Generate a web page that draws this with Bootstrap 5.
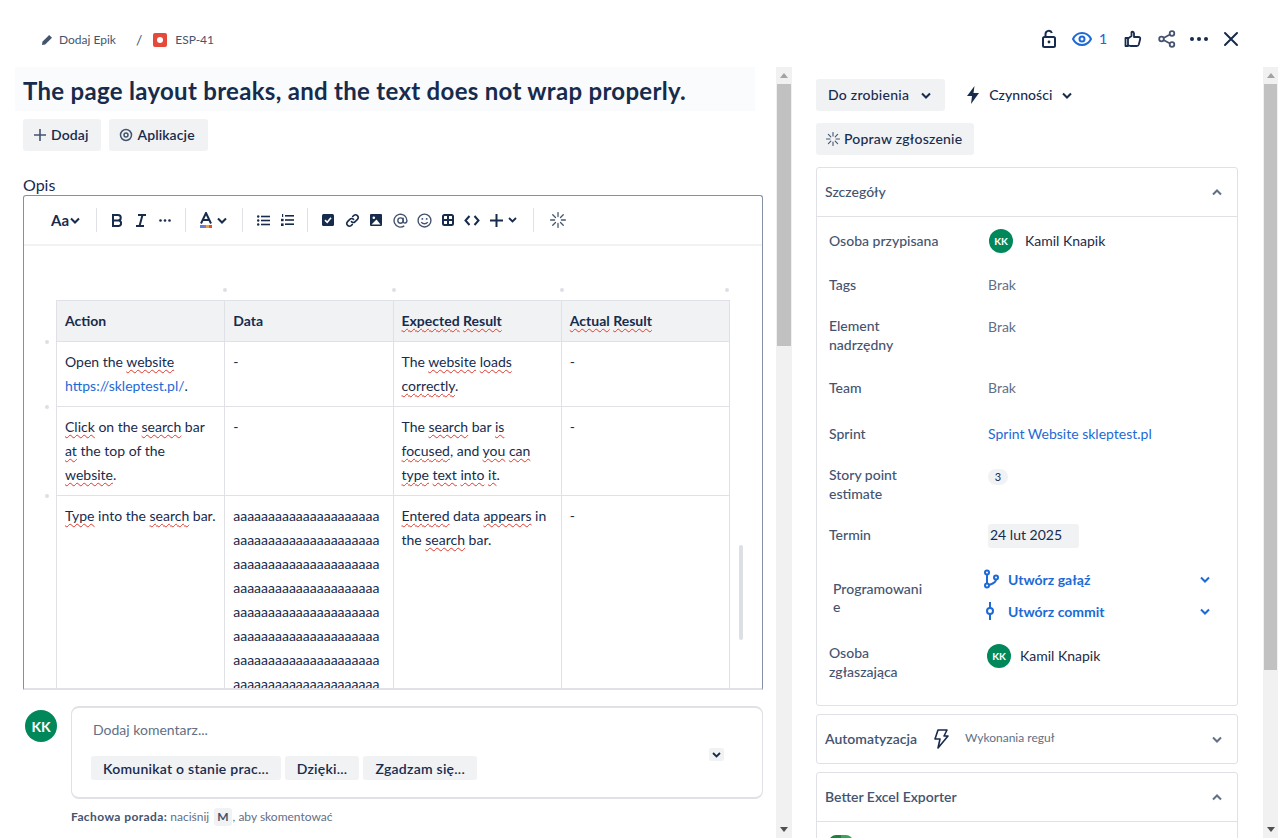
<!DOCTYPE html>
<html lang="pl">
<head>
<meta charset="UTF-8" />
<title>ESP-41</title>
<link rel="stylesheet" href="https://cdn.jsdelivr.net/npm/bootstrap@5.3.3/dist/css/bootstrap.min.css" />
<style>
  html, body { height: 100%; overflow: hidden; }
  body { font-family: "Lato", "Noto Sans", sans-serif; font-size: 14px; color: #172b4d; background: #fff; }
  svg { display: block; flex: none; }
  .topbar { height: 67px; padding: 12px 0 0 41px; }
  .crumb { font-size: 12px; color: #44546f; }
  .crumb-pen { margin-right: 6px; }
  .crumb-slash { margin: 0 11px 0 20px; font-size: 14px; }
  .issue-ico { width: 14px; height: 14px; background: #e5493a; border-radius: 2px; margin-right: 8px; }
  .issue-ico::after { content: ""; width: 6px; height: 6px; border-radius: 50%; background: #fff; }
  .top-acts { margin: -2px 31px 0 0; }
  .top-act { width: 32px; height: 24px; }
  .lock-act { margin-right: 7px; }
  .thumb-act { margin-right: 2px; }
  .watch { width: 45px; color: #1d6ad6; font-size: 14px; font-weight: 500; gap: 7px; }

  .panes { height: 771px; }
  .leftpane { width: 776px; overflow: hidden; }
  .rightpane { width: 471px; padding: 12px 25px 0 24px; overflow: hidden; }
  .sbar { background: #f1f1f1; width: 16px; }
  .sbar-r { width: 15px; }
  .sbar-up, .sbar-down { height: 17px; }
  .sbar-up::after { content: ""; border: 4px solid transparent; border-top: 0; border-bottom: 5px solid #a3a3a3; }
  .sbar-down::after { content: ""; border: 4px solid transparent; border-bottom: 0; border-top: 5px solid #505050; }
  .sbar-thumb { background: #c1c1c1; margin: 0 1px; }
  .thumb-l { height: 262px; }
  .thumb-r { height: 586px; }

  .title-box { margin-left: 15px; width: 740px; height: 44px; padding-left: 8px; background: #fafbfc; font-size: 24px; font-weight: 700; line-height: 48px; letter-spacing: .3px; }
  .act-btn { height: 32px; padding: 0 13px 2px 10px; border-radius: 3px; border: 0; background: #f1f2f4; color: #172b4d; font-size: 14px; font-weight: 600; letter-spacing: .1px; gap: 4px; }
  .act-btn svg { margin-top: 2px; }
  .left-acts { margin: 8px 0 0 23px; gap: 8px; }
  .opis-lbl { margin: 26px 0 0 23px; font-size: 16px; line-height: 16px; padding-bottom: 2px; }

  .editor { margin-left: 23px; width: 740px; height: 495px; border: 1px solid #8590a2; border-bottom: 2px solid #dfe1e6; border-radius: 3px 3px 0 0; position: relative; overflow: hidden; }
  .tbar { height: 50px; border-bottom: 2px solid #f1f2f4; padding-left: 15px; }
  .tb-ico { width: 24px; height: 24px; }
  .tb-sep { width: 1px; height: 24px; background: #dfe1e6; margin: 0 8px; }
  .tb-sep-wide { margin-left: 15px; }
  .tb-aa { font-size: 15px; font-weight: 700; width: 49px; padding-left: 12px; gap: 1px; }
  .tb-chev { margin-left: -1px; }
  .editor-body { padding: 54px 0 0 32px; }
  .desc-tbl { table-layout: fixed; width: 674px; border-collapse: collapse; line-height: 24px; }
  .desc-tbl th, .desc-tbl td { border: 1px solid #dfe1e6; padding: 8px; vertical-align: top; position: relative; font-weight: 400; }
  .desc-tbl th { background: #f1f2f4; font-weight: 700; }
  .desc-tbl a { color: #1d6ad6; text-decoration: none; }
  .aaa { word-break: break-all; }
  .typo { text-decoration: underline wavy #e0392b; text-decoration-thickness: 1.2px; text-underline-offset: 2px; }
  .hdot, .vdot { position: absolute; width: 4px; height: 4px; border-radius: 50%; background: #dcdfe4; }
  .hdot { right: -3px; top: -13px; }
  .desc-tbl th:last-child .hdot { right: 0; }
  .vdot { left: -12px; top: -2px; }
  .inner-thumb { position: absolute; right: 19px; top: 349px; width: 4px; height: 95px; background: #dcdfe4; border-radius: 2px; }

  .cmt-wrap { padding: 16px 13px 0 25px; gap: 14px; }
  .ava { background: #00875a; color: #fff; border-radius: 50%; font-weight: 700; }
  .ava-32 { width: 32px; height: 32px; font-size: 14px; margin-top: 4px; }
  .ava-24 { width: 24px; height: 24px; font-size: 10px; }
  .cmt-box { width: 692px; height: 93px; border: 1px solid #dfe1e6; border-top-width: 2px; border-bottom-width: 2px; border-radius: 8px; padding: 12px 19px; position: relative; }
  .cmt-ph { color: #626f86; line-height: 20px; padding-left: 2px; }
  .cmt-chips { margin-top: 16px; gap: 4px; }
  .cmt-chip { height: 24px; padding: 0 12px; background: #f1f2f4; border-radius: 3px; font-weight: 600; font-size: 14px; color: #172b4d; border: 0; letter-spacing: .25px; }
  .cmt-more { position: absolute; right: 38px; top: 40px; width: 15px; height: 13px; background: #f1f2f4; border-radius: 2px; }
  .tip { margin: 9px 0 0 71px; font-size: 12px; color: #626f86; line-height: 18px; }
  .tip b { color: #44546f; font-weight: 700; letter-spacing: .4px; }
  .keycap { background: #f1f2f4; padding: 0 3px; margin: 0 1px 0 2px; border-radius: 3px; font-weight: 700; color: #44546f; display: inline-block; }

  .status-row { gap: 8px; margin-bottom: 12px; }
  .status-btn { padding: 0 14px 2px 12px; font-weight: 500; letter-spacing: .25px; }
  .plain-btn { background: transparent; gap: 8px; padding-left: 12px; font-weight: 500; letter-spacing: .05px; }
  .chev-tight { margin-left: 2px; }
  .fix-btn { padding-right: 12px; font-weight: 500; letter-spacing: .22px; }
  .panel-box { border: 1px solid #dfe1e6; border-radius: 3px; margin-bottom: 8px; }
  .panel-hd { height: 48px; padding: 0 15px 2px 8px; font-weight: 500; color: #44546f; }
  .panel-hd svg { margin-top: 2px; }
  .panel-hd.ruled { height: 49px; border-bottom: 1px solid #dfe1e6; }
  .panel-name { font-weight: 600; }
  .first-panel { margin-top: 12px; }
  .det-grid { display: grid; grid-template-columns: 159px 1fr; grid-template-rows: 46px 42px 61px 46px 42px 59px 43px 76px 61px; padding: 12px 12px 0 12px; line-height: 19px; }
  .det-lbl { color: #44546f; font-weight: 500; padding-right: 50px; }
  .det-lbl.one { line-height: 20px; }
  .det-lbl.two { margin-top: -1px; }
  .det-val { color: #626f86; }
  .det-val.dark { color: #172b4d; }
  .assignee { height: 24px; padding-bottom: 2px; }
  .assignee .ava { margin: 2px 0 0 1px; }
  .det-link { color: #1d6ad6; }
  .det-link-b { color: #1d6ad6; font-weight: 700; height: 32px; padding-right: 15px; }
  .prog-ico { margin-right: 9px; margin-left: -5px; }
  .prog-lbl { padding: 12px 0 0 4px; width: 96px; word-break: break-all; line-height: 18px; color: #44546f; font-weight: 500; }
  .prog-vals { margin-top: -5px; }
  .reporter { margin-left: -1px; gap: 9px; }
  .reporter-name { line-height: 23px; }
  .pill { background: #f1f2f4; border-radius: 8px; min-width: 20px; height: 16px; font-size: 11px; line-height: 16px; margin-top: 1px; text-align: center; color: #172b4d; display: inline-block; }
  .date-box { background: #f1f2f4; width: 91px; height: 24px; padding-left: 2px; border-radius: 3px; line-height: 22px; color: #172b4d; margin-top: -1px; }
  .rule-sub { font-size: 12px; color: #626f86; font-weight: 400; }
  .green-stub { width: 24px; height: 24px; margin: 13px 0 0 12px; background: linear-gradient(90deg, #1f7f3c 50%, #37a654 50%); border-radius: 7px; }
  .exporter-body { height: 60px; }
</style>
</head>
<body>
  <div class="topbar d-flex align-items-center justify-content-between">
    <div class="crumb d-flex align-items-center">
      <svg class="crumb-pen" width="12" height="12" viewBox="0 0 12 12"><path d="M8.2 1 11 3.8 4.2 10.6 1 11 1.4 7.8z" fill="#44546f"/></svg>
      <span>Dodaj Epik</span>
      <span class="crumb-slash">/</span>
      <span class="issue-ico d-flex align-items-center justify-content-center"></span>
      <span>ESP-41</span>
    </div>
    <div class="top-acts d-flex align-items-center">
      <span class="top-act lock-act d-flex align-items-center justify-content-center">
        <svg width="16" height="20" viewBox="0 0 16 20" fill="none" stroke="#172b4d" stroke-width="2"><rect x="2" y="8" width="12" height="10" rx="1.5"/><path d="M4.5 8V5a3.3 3.3 0 0 1 6.4-1"/><circle cx="8" cy="13" r="1.4" fill="#172b4d" stroke="none"/></svg>
      </span>
      <span class="watch d-flex align-items-center">
        <svg width="20" height="16" viewBox="0 0 20 16" fill="none" stroke="#1d6ad6" stroke-width="2"><path d="M1 8c2-4 5.200-6 9-6s7 2 9 6c-2 4-5.200 6-9 6s-7-2-9-6z"/><circle cx="10" cy="8" r="2.500"/></svg>
        <span>1</span>
      </span>
      <span class="top-act thumb-act d-flex align-items-center justify-content-center">
        <svg width="18" height="18" viewBox="0 0 18 18" fill="none" stroke="#172b4d" stroke-width="1.800" stroke-linejoin="round"><path d="M1.500 8h2.500v8H1.500z"/><path d="M4 8.500 7.500 6V2.500c0-1.300 2.500-1.300 2.500 1V7h4.500c1.300 0 2 1 1.700 2l-1.400 5.500c-.3 1-1 1.500-2 1.500H7c-1.500 0-2-.5-3-.8"/></svg>
      </span>
      <span class="top-act d-flex align-items-center justify-content-center">
        <svg width="18" height="18" viewBox="0 0 18 18" fill="none" stroke="#44546f" stroke-width="1.800"><circle cx="3.500" cy="9" r="2.300"/><circle cx="14" cy="3.500" r="2.300"/><circle cx="14" cy="14.500" r="2.300"/><path d="M5.500 8 12 4.500M5.500 10 12 13.500"/></svg>
      </span>
      <span class="top-act d-flex align-items-center justify-content-center">
        <svg width="18" height="4" viewBox="0 0 18 4" fill="#172b4d"><circle cx="2" cy="2" r="2"/><circle cx="9" cy="2" r="2"/><circle cx="16" cy="2" r="2"/></svg>
      </span>
      <span class="top-act d-flex align-items-center justify-content-center">
        <svg width="16" height="16" viewBox="0 0 16 16" stroke="#172b4d" stroke-width="2" stroke-linecap="round"><path d="M2 2l12 12M14 2 2 14"/></svg>
      </span>
    </div>
  </div>

  <div class="panes d-flex">
    <div class="leftpane d-flex flex-column">
      <h1 class="title-box mb-0">The page layout breaks, and the text does not wrap properly.</h1>
      <div class="left-acts d-flex">
        <button class="act-btn d-flex align-items-center" type="button">
          <svg width="14" height="14" viewBox="0 0 14 14" stroke="#44546f" stroke-width="1.600"><path d="M7 1v12M1 7h12"/></svg>Dodaj
        </button>
        <button class="act-btn d-flex align-items-center" type="button">
          <svg width="14" height="14" viewBox="0 0 14 14" fill="none" stroke="#44546f" stroke-width="1.500"><circle cx="7" cy="7" r="5.500"/><circle cx="7" cy="7" r="2"/></svg>Aplikacje
        </button>
      </div>
      <div class="opis-lbl">Opis</div>
      <div class="editor">
        <div class="tbar d-flex align-items-center">
          <span class="tb-aa d-flex align-items-center">Aa<svg width="10" height="7" viewBox="0 0 10 7" fill="none" stroke="#172b4d" stroke-width="2"><path d="M1 1.500 5 5.500 9 1.500"/></svg></span>
          <span class="tb-sep"></span>
          <span class="tb-ico d-flex align-items-center justify-content-center"><svg width="12" height="13" viewBox="0 0 12 13" fill="none" stroke="#172b4d" stroke-width="2"><path d="M2 1h5a2.700 2.700 0 0 1 0 5.500H2zM2 6.500h5.800a2.800 2.800 0 0 1 0 5.500H2z"/></svg></span>
          <span class="tb-ico d-flex align-items-center justify-content-center"><svg width="12" height="13" viewBox="0 0 12 13" fill="none" stroke="#172b4d" stroke-width="2"><path d="M3 1h8M1 12h8M7.500 1 4.500 12"/></svg></span>
          <span class="tb-ico d-flex align-items-center justify-content-center"><svg width="12" height="3" viewBox="0 0 12 3" fill="#172b4d"><circle cx="1.500" cy="1.500" r="1.300"/><circle cx="6" cy="1.500" r="1.300"/><circle cx="10.500" cy="1.500" r="1.300"/></svg></span>
          <span class="tb-sep"></span>
          <span class="tb-ico d-flex align-items-center justify-content-center"><svg width="12" height="16" viewBox="0 0 12 16"><path d="M1 11.500 6 1l5 10.500M3 8h6" fill="none" stroke="#172b4d" stroke-width="2"/><rect y="13" width="3" height="3" fill="#5b7fd8"/><rect x="3" y="13" width="3" height="3" fill="#8a6fd0"/><rect x="6" y="13" width="3" height="3" fill="#e8a33a"/><rect x="9" y="13" width="3" height="3" fill="#e5493a"/></svg></span>
          <span class="tb-chev d-flex align-items-center"><svg width="10" height="7" viewBox="0 0 10 7" fill="none" stroke="#172b4d" stroke-width="2"><path d="M1 1.500 5 5.500 9 1.500"/></svg></span>
          <span class="tb-sep tb-sep-wide"></span>
          <span class="tb-ico d-flex align-items-center justify-content-center"><svg width="13" height="11" viewBox="0 0 13 11" fill="#172b4d"><circle cx="1.200" cy="1.500" r="1.200"/><circle cx="1.200" cy="5.500" r="1.200"/><circle cx="1.200" cy="9.500" r="1.200"/><rect x="4" y="0.700" width="9" height="1.600"/><rect x="4" y="4.700" width="9" height="1.600"/><rect x="4" y="8.700" width="9" height="1.600"/></svg></span>
          <span class="tb-ico d-flex align-items-center justify-content-center"><svg width="13" height="12" viewBox="0 0 13 12" fill="#172b4d"><rect x="1" y="0" width="1.200" height="3"/><rect y="4.800" width="2.600" height="2.400"/><rect y="9.400" width="2.600" height="2.600"/><rect x="4" y="1" width="9" height="1.600"/><rect x="4" y="5.200" width="9" height="1.600"/><rect x="4" y="9.400" width="9" height="1.600"/></svg></span>
          <span class="tb-sep"></span>
          <span class="tb-ico d-flex align-items-center justify-content-center"><svg width="12" height="12" viewBox="0 0 12 12"><rect width="12" height="12" rx="1.500" fill="#172b4d"/><path d="M3 6.200 5.200 8.300 9 3.800" fill="none" stroke="#fff" stroke-width="1.600"/></svg></span>
          <span class="tb-ico d-flex align-items-center justify-content-center"><svg width="15" height="15" viewBox="0 0 14 14" fill="none" stroke="#172b4d" stroke-width="1.500" stroke-linecap="round"><path d="M6 8a2.500 2.500 0 0 0 3.500 0l2.300-2.300a2.500 2.500 0 0 0-3.500-3.500L7.200 3.300"/><path d="M8 6a2.500 2.500 0 0 0-3.500 0L2.200 8.300a2.500 2.500 0 0 0 3.500 3.500l1.100-1.100"/></svg></span>
          <span class="tb-ico d-flex align-items-center justify-content-center"><svg width="12" height="12" viewBox="0 0 12 12"><rect width="12" height="12" rx="1" fill="#172b4d"/><circle cx="3.800" cy="3.800" r="1.300" fill="#fff"/><path d="M1.500 10.500 6.500 5.500 10.500 10.500z" fill="#fff"/></svg></span>
          <span class="tb-ico d-flex align-items-center justify-content-center"><svg width="15" height="15" viewBox="0 0 14 14" fill="none" stroke="#44546f" stroke-width="1.300"><circle cx="7" cy="7" r="2.500"/><path d="M9.500 4.500V8c0 2 3.500 2 3.500-1a6 6 0 1 0-2.500 5"/></svg></span>
          <span class="tb-ico d-flex align-items-center justify-content-center"><svg width="15" height="15" viewBox="0 0 14 14" fill="none" stroke="#44546f" stroke-width="1.300"><circle cx="7" cy="7" r="6"/><circle cx="5" cy="5.500" r=".9" fill="#44546f" stroke="none"/><circle cx="9" cy="5.500" r=".9" fill="#44546f" stroke="none"/><path d="M4 8.500c1.500 2 4.500 2 6 0"/></svg></span>
          <span class="tb-ico d-flex align-items-center justify-content-center"><svg width="12" height="12" viewBox="0 0 12 12" fill="none" stroke="#172b4d" stroke-width="2"><rect x="1" y="1" width="10" height="10" rx="1.500"/><path d="M6 1v10M1 6h10"/></svg></span>
          <span class="tb-ico d-flex align-items-center justify-content-center"><svg width="16" height="11" viewBox="0 0 16 11" fill="none" stroke="#172b4d" stroke-width="2"><path d="M5.500 1 1.500 5.500l4 4.500M10.500 1l4 4.500-4 4.500"/></svg></span>
          <span class="tb-ico d-flex align-items-center justify-content-center"><svg width="13" height="13" viewBox="0 0 13 13" stroke="#172b4d" stroke-width="2"><path d="M6.500 0v13M0 6.500h13"/></svg></span>
          <span class="d-flex align-items-center"><svg width="9" height="6" viewBox="0 0 9 6" fill="none" stroke="#172b4d" stroke-width="1.800"><path d="M1 1l3.500 3.500L8 1"/></svg></span>
          <span class="tb-sep ms-3"></span>
          <span class="tb-ico d-flex align-items-center justify-content-center ms-1"><svg width="16" height="16" viewBox="0 0 14 14" stroke="#44546f" stroke-width="1.100" stroke-linecap="round"><path d="M7 0.500v3.500M7 10v3.500M0.500 7H4M10 7h3.500M2.400 2.400 4.800 4.800M9.200 9.200l2.400 2.400M11.600 2.400 9.200 4.800M4.800 9.200l-2.400 2.400"/></svg></span>
        </div>
        <div class="editor-body">
          <table class="desc-tbl">
            <thead>
              <tr>
                <th>Action<span class="hdot"></span></th>
                <th>Data<span class="hdot"></span></th>
                <th><span class="typo">Expected</span> <span class="typo">Result</span><span class="hdot"></span></th>
                <th><span class="typo">Actual</span> <span class="typo">Result</span><span class="hdot"></span></th>
              </tr>
            </thead>
            <tbody>
              <tr>
                <td><span class="vdot"></span>Open the <span class="typo">website</span> <a href="#">https://skleptest.pl/</a>.</td>
                <td>-</td>
                <td>The <span class="typo">website</span> <span class="typo">loads</span> <span class="typo">correctly</span>.</td>
                <td>-</td>
              </tr>
              <tr>
                <td><span class="vdot"></span><span class="typo">Click</span> on the <span class="typo">search</span> bar <span class="typo">at</span> the top of the <span class="typo">website</span>.</td>
                <td>-</td>
                <td>The <span class="typo">search</span> bar <span class="typo">is</span> <span class="typo">focused</span>, and <span class="typo">you</span> <span class="typo">can</span> <span class="typo">type</span> <span class="typo">text</span> <span class="typo">into</span> <span class="typo">it</span>.</td>
                <td>-</td>
              </tr>
              <tr>
                <td><span class="vdot"></span><span class="typo">Type</span> into the <span class="typo">search</span> bar.</td>
                <td class="aaa">aaaaaaaaaaaaaaaaaaaaaaaaaaaaaaaaaaaaaaaaaaaaaaaaaaaaaaaaaaaaaaaaaaaaaaaaaaaaaaaaaaaaaaaaaaaaaaaaaaaaaaaaaaaaaaaaaaaaaaaaaaaaaaaaaaaaaaaaaaaaaaaaaaaaaaaaaaaaaaaaaaaaaaaaaaaaaaaaaaaaaaaaaaaaaaaaaaaaaaaaaa</td>
                <td><span class="typo">Entered</span> data <span class="typo">appears</span> in the <span class="typo">search</span> bar.</td>
                <td>-</td>
              </tr>
            </tbody>
          </table>
        </div>
        <div class="inner-thumb"></div>
      </div>
      <div class="cmt-wrap d-flex">
        <div class="ava ava-32 d-flex align-items-center justify-content-center flex-none">KK</div>
        <div class="cmt-box">
          <div class="cmt-ph">Dodaj komentarz...</div>
          <div class="cmt-chips d-flex">
            <button class="cmt-chip" type="button">Komunikat o stanie prac...</button>
            <button class="cmt-chip" type="button">Dzięki...</button>
            <button class="cmt-chip" type="button">Zgadzam się...</button>
          </div>
          <div class="cmt-more d-flex align-items-center justify-content-center"><svg width="9" height="6" viewBox="0 0 9 6" fill="none" stroke="#172b4d" stroke-width="1.800"><path d="M1 1l3.500 3.500L8 1"/></svg></div>
        </div>
      </div>
      <div class="tip"><b>Fachowa porada:</b> naciśnij <span class="keycap">M</span>, aby skomentować</div>
    </div>
    <div class="sbar d-flex flex-column flex-none">
      <div class="sbar-up d-flex align-items-center justify-content-center"></div>
      <div class="sbar-thumb thumb-l"></div>
      <div class="flex-grow-1"></div>
      <div class="sbar-down d-flex align-items-center justify-content-center"></div>
    </div>

    <div class="rightpane">
      <div class="status-row d-flex">
        <button class="act-btn status-btn d-flex align-items-center" type="button">Do zrobienia
          <svg class="ms-2" width="10" height="7" viewBox="0 0 10 7" fill="none" stroke="#172b4d" stroke-width="2"><path d="M1 1.500 5 5.500 9 1.500"/></svg>
        </button>
        <button class="act-btn plain-btn d-flex align-items-center" type="button">
          <svg width="16" height="18" viewBox="0 0 16 18" fill="#172b4d"><path d="M9.500 0 2 10h5l-1 8 8-11H8.500z"/></svg>
          Czynności
          <svg class="chev-tight" width="10" height="7" viewBox="0 0 10 7" fill="none" stroke="#172b4d" stroke-width="2"><path d="M1 1.500 5 5.500 9 1.500"/></svg>
        </button>
      </div>
      <button class="act-btn fix-btn d-flex align-items-center" type="button">
        <svg width="14" height="14" viewBox="0 0 14 14" stroke="#44546f" stroke-width="1.100" stroke-linecap="round"><path d="M7 0.500v3.500M7 10v3.500M0.500 7H4M10 7h3.500M2.400 2.400 4.800 4.800M9.200 9.200l2.400 2.400M11.600 2.400 9.200 4.800M4.800 9.200l-2.400 2.400"/></svg>
        Popraw zgłoszenie
      </button>

      <div class="panel-box first-panel">
        <div class="panel-hd ruled d-flex align-items-center justify-content-between">
          <span>Szczegóły</span>
          <svg width="10" height="7" viewBox="0 0 10 7" fill="none" stroke="#626f86" stroke-width="2"><path d="M1 5.500 5 1.500 9 5.500"/></svg>
        </div>
        <div class="det-grid">
          <div class="det-lbl assignee d-flex align-items-center align-self-start text-nowrap">Osoba przypisana</div>
          <div class="det-val dark assignee d-flex align-items-center align-self-start gap-2"><span class="ava ava-24 d-flex align-items-center justify-content-center">KK</span><span class="ms-1">Kamil Knapik</span></div>
          <div class="det-lbl one">Tags</div>
          <div class="det-val">Brak</div>
          <div class="det-lbl two">Element nadrzędny</div>
          <div class="det-val">Brak</div>
          <div class="det-lbl one">Team</div>
          <div class="det-val">Brak</div>
          <div class="det-lbl one">Sprint</div>
          <div class="det-link">Sprint Website skleptest.pl</div>
          <div class="det-lbl two">Story point estimate</div>
          <div><span class="pill">3</span></div>
          <div class="det-lbl one">Termin</div>
          <div><div class="date-box">24 lut 2025</div></div>
          <div class="prog-lbl">Programowanie</div>
          <div class="prog-vals">
            <div class="det-link-b d-flex align-items-center justify-content-between">
              <span class="d-flex align-items-center">
                <svg class="prog-ico" width="16" height="20" viewBox="0 0 16 20" fill="none" stroke="#1d6ad6" stroke-width="2"><circle cx="4" cy="3.500" r="2"/><circle cx="4" cy="16.500" r="2"/><circle cx="13" cy="8.500" r="2"/><path d="M4 5.500v9M13 10.500c0 3.500-4 4.500-7 5.500"/></svg>
                Utwórz gałąź
              </span>
              <svg width="10" height="7" viewBox="0 0 10 7" fill="none" stroke="#1d6ad6" stroke-width="2"><path d="M1 1.500 5 5.500 9 1.500"/></svg>
            </div>
            <div class="det-link-b d-flex align-items-center justify-content-between">
              <span class="d-flex align-items-center">
                <svg class="prog-ico" width="16" height="18" viewBox="0 0 16 18" fill="none" stroke="#1d6ad6" stroke-width="2"><circle cx="7" cy="9" r="3"/><path d="M7 0v6M7 12v6"/></svg>
                Utwórz commit
              </span>
              <svg width="10" height="7" viewBox="0 0 10 7" fill="none" stroke="#1d6ad6" stroke-width="2"><path d="M1 1.500 5 5.500 9 1.500"/></svg>
            </div>
          </div>
          <div class="det-lbl two">Osoba zgłaszająca</div>
          <div class="det-val dark reporter d-flex align-items-start"><span class="ava ava-24 d-flex align-items-center justify-content-center">KK</span><span class="reporter-name">Kamil Knapik</span></div>
        </div>
      </div>

      <div class="panel-box">
        <div class="panel-hd d-flex align-items-center">
          <span class="panel-name">Automatyzacja</span>
          <svg class="mx-3" width="16" height="20" viewBox="0 0 16 20" fill="none" stroke="#172b4d" stroke-width="1.600" stroke-linejoin="round"><path d="M5 1h9l-3 6h4L5 19l2-9H2z"/></svg>
          <span class="rule-sub">Wykonania reguł</span>
          <svg class="ms-auto" width="10" height="7" viewBox="0 0 10 7" fill="none" stroke="#626f86" stroke-width="2"><path d="M1 1.500 5 5.500 9 1.500"/></svg>
        </div>
      </div>

      <div class="panel-box">
        <div class="panel-hd ruled d-flex align-items-center justify-content-between">
          <span class="panel-name">Better Excel Exporter</span>
          <svg width="10" height="7" viewBox="0 0 10 7" fill="none" stroke="#626f86" stroke-width="2"><path d="M1 5.500 5 1.500 9 5.500"/></svg>
        </div>
        <div class="exporter-body"><div class="green-stub"></div></div>
      </div>
    </div>
    <div class="sbar sbar-r d-flex flex-column flex-none">
      <div class="sbar-up d-flex align-items-center justify-content-center"></div>
      <div class="sbar-thumb thumb-r"></div>
      <div class="flex-grow-1"></div>
      <div class="sbar-down d-flex align-items-center justify-content-center"></div>
    </div>
  </div>
  <script src="https://cdn.jsdelivr.net/npm/bootstrap@5.3.3/dist/js/bootstrap.bundle.min.js"></script>
</body>
</html>
